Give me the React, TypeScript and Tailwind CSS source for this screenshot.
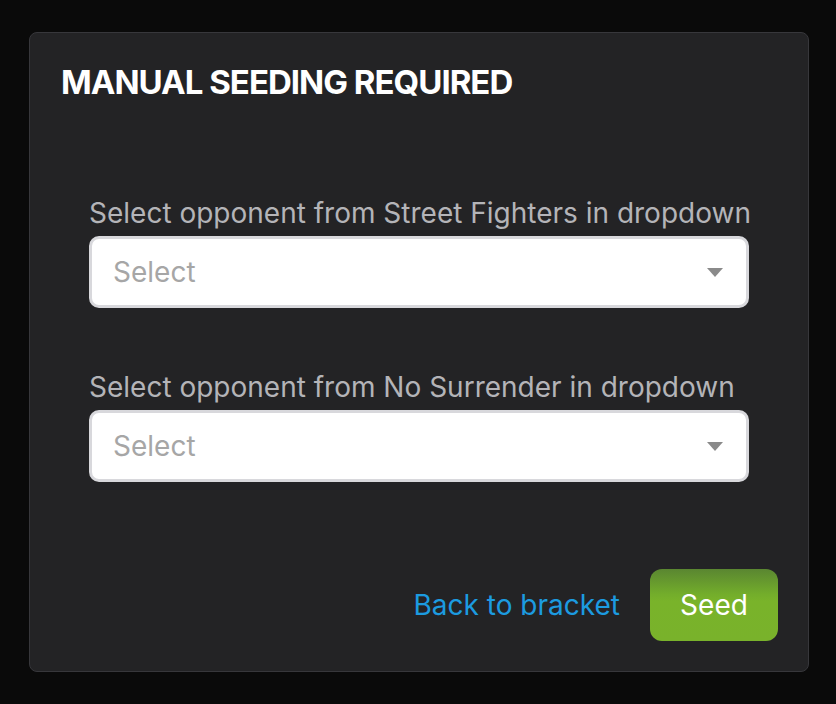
export default function App() {
  return (
    <div className="h-[704px] w-full bg-[#0a0a0a] pl-[29px] pt-[32px]" style={{ fontFamily: "Inter, 'Noto Sans', sans-serif" }}>
      <div className="flex h-[640px] w-[780px] flex-col rounded-[8px] border border-[#37373b] bg-[#232325]">
        <div className="px-[31px] pt-[29px]">
          <h1 className="text-[33px] font-bold leading-[40px] tracking-[-0.03em] text-white">MANUAL SEEDING REQUIRED</h1>
        </div>
        <div className="flex flex-col gap-[62px] px-[59px] pt-[94px]">
          <Field label="Select opponent from Street Fighters in dropdown" />
          <Field label="Select opponent from No Surrender in dropdown" />
        </div>
        <div className="mt-auto flex items-center justify-end gap-[30px] px-[30px] pb-[30px]">
          <button className="text-[28px] text-[#1c9be0]">Back to bracket</button>
          <button className="h-[72px] w-[128px] rounded-[12px] bg-[linear-gradient(to_bottom,#5a8631_0%,#73ad2b_35%,#79b32a_45%,#79b22b_100%)] text-[28px] text-white">
            Seed
          </button>
        </div>
      </div>
    </div>
  );
}

function Field({ label }: { label: string }) {
  return (
    <div className="flex flex-col gap-[6px]">
      <label className="whitespace-nowrap text-[28px] leading-[34px] text-[#b4b4b8]">{label}</label>
      <div className="flex h-[72px] items-center justify-between rounded-[10px] border-[3px] border-[#d8d8dc] bg-white pl-[21px] pr-[23px]">
        <span className="text-[28px] text-[#a6a6a6]">Select</span>
        <svg width="16" height="9" viewBox="0 0 16 9">
          <path d="M0 0 H16 L8 9 Z" fill="#8a8a8a" />
        </svg>
      </div>
    </div>
  );
}
